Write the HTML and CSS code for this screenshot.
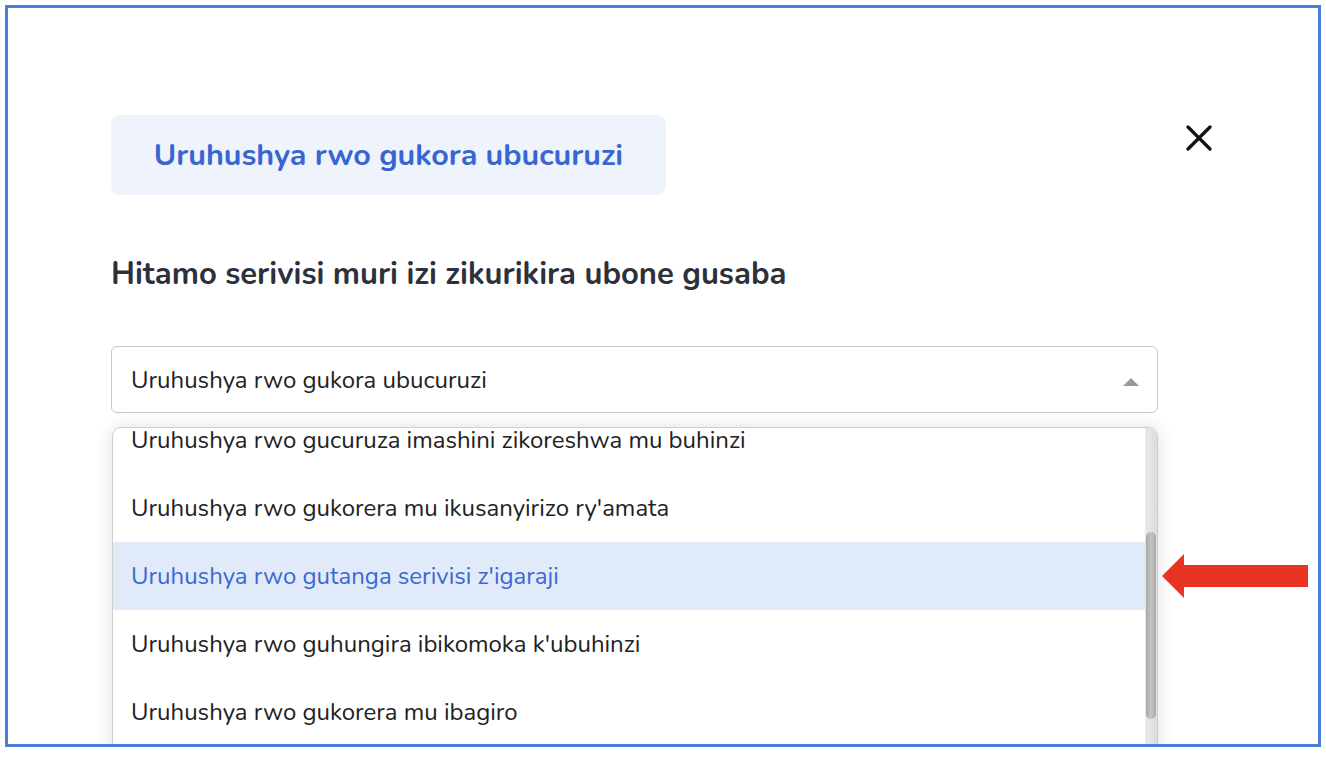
FILE: index.html
```html
<!DOCTYPE html>
<html>
<head>
<meta charset="utf-8">
<link rel="stylesheet" href="styles.css">
</head>
<body>
<div class="frame">
  <div class="top-row">
    <div class="badge">Uruhushya rwo gukora ubucuruzi</div>
    <button class="close" aria-label="close">
      <svg width="26" height="26" viewBox="0 0 26 26"><path d="M2 2 L24 24 M24 2 L2 24" stroke="#111" stroke-width="3.2" stroke-linecap="round" fill="none"/></svg>
    </button>
  </div>
  <h2 class="heading">Hitamo serivisi muri izi zikurikira ubone gusaba</h2>
  <div class="select">
    <span class="value">Uruhushya rwo gukora ubucuruzi</span>
    <span class="caret"></span>
  </div>
  <div class="menu-wrap">
    <div class="menu">
      <ul class="options">
        <li>Uruhushya rwo gucuruza imashini zikoreshwa mu buhinzi</li>
        <li>Uruhushya rwo gukorera mu ikusanyirizo ry'amata</li>
        <li class="active">Uruhushya rwo gutanga serivisi z'igaraji</li>
        <li>Uruhushya rwo guhungira ibikomoka k'ubuhinzi</li>
        <li>Uruhushya rwo gukorera mu ibagiro</li>
      </ul>
      <div class="scrollbar"><div class="thumb"></div></div>
    </div>
    <svg class="arrow" width="148" height="44" viewBox="0 0 148 44"><polygon points="0,22 22,0 22,11 146,11 146,33 22,33 22,44" fill="#e93424"/></svg>
  </div>
</div>
</body>
</html>
```

FILE: styles.css
```css
* { box-sizing: border-box; }
html, body { margin: 0; padding: 0; background: #fff; }
body {
  width: 1326px;
  height: 758px;
  overflow: hidden;
  font-family: "Nunito", "Open Sans", "Noto Sans", sans-serif;
}
.frame {
  margin: 5px 0 0 5px;
  width: 1316px;
  height: 742px;
  border: 3px solid #4a7fd8;
  background: #fff;
  padding: 107px 0 0 103px;
  overflow: hidden;
}
.top-row {
  display: flex;
  align-items: flex-start;
  width: 1101px;
}
.badge {
  width: 555px;
  height: 80px;
  background: #eef3fc;
  border-radius: 9px;
  color: #3766d2;
  font-weight: 700;
  font-size: 30.5px;
  display: flex;
  align-items: center;
  justify-content: center;
}
.close {
  margin-left: auto;
  margin-top: 10px;
  background: none;
  border: 0;
  padding: 0;
  width: 26px;
  height: 26px;
  display: block;
}
.close svg { display: block; }
.heading {
  margin: 58px 0 0 0;
  font-size: 31px;
  font-weight: 700;
  color: #2c313b;
  line-height: 42px;
}
.select {
  margin-top: 51px;
  width: 1047px;
  height: 67px;
  border: 1px solid #c9c9c9;
  border-radius: 6px;
  display: flex;
  align-items: center;
  padding: 0 18px 0 19px;
  font-size: 24px;
  color: #222;
}
.caret {
  margin-left: auto;
  width: 0;
  height: 0;
  border-left: 8.5px solid transparent;
  border-right: 8.5px solid transparent;
  border-bottom: 8px solid #999;
  margin-top: 4px;
}
.menu-wrap {
  position: relative;
  margin-top: 14px;
  margin-left: 1px;
}
.menu {
  width: 1046px;
  height: 330px;
  border: 1px solid #cfcfcf;
  border-radius: 9px 9px 0 0;
  box-shadow: 0 0 18px rgba(0,0,0,0.13);
  display: flex;
  overflow: hidden;
  background: #fff;
}
.options {
  list-style: none;
  margin: -22px 0 0 0;
  padding: 0;
  flex: 1;
}
.options li {
  height: 68px;
  display: flex;
  align-items: center;
  padding-left: 18px;
  font-size: 24px;
  color: #222;
}
.options li.active {
  background: #e1eaf8;
  color: #3a68d3;
}
.scrollbar {
  width: 12px;
  background: linear-gradient(to right, #e9e9e9, #dcdcdc);
  border-radius: 0 8px 0 0;
  position: relative;
}
.thumb {
  position: absolute;
  left: 1px;
  width: 10px;
  top: 104px;
  height: 187px;
  border-radius: 5px;
  background: linear-gradient(to right, #a9a9a9, #c4c4c4, #a9a9a9);
}
.arrow {
  position: absolute;
  left: 1050px;
  top: 127px;
}
```
